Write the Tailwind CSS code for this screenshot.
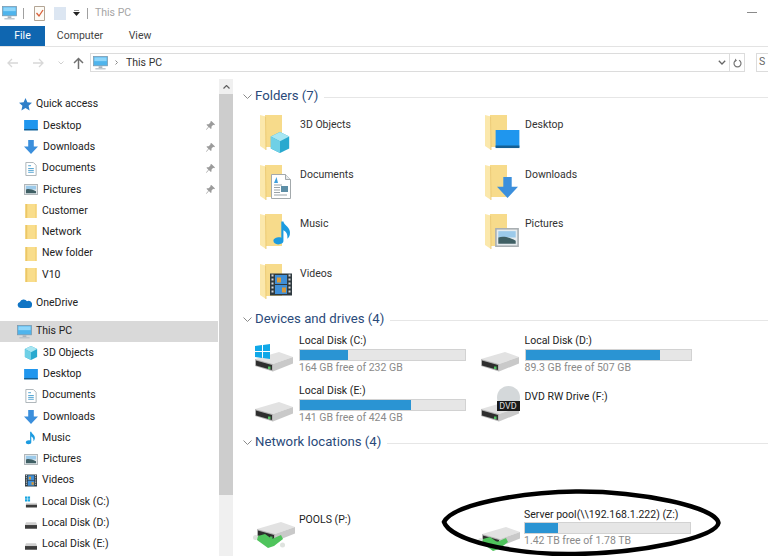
<!DOCTYPE html>
<html lang="en">
<head>
<meta charset="UTF-8" />
<title>This PC</title>
<script src="https://cdn.jsdelivr.net/npm/@tailwindcss/browser@4"></script>
</head>
<body class="bg-white text-[#222] w-[768px] h-[556px] overflow-hidden relative font-['Roboto',sans-serif] text-[10.500px] leading-none">

<!-- shared icons -->
<svg class="hidden" width="0" height="0">
  <symbol id="pc" viewBox="0 0 16 15">
    <rect x="0.5" y="0.5" width="15" height="10" fill="#4fb4ec" stroke="#7b98ad" stroke-width="0.8"/>
    <rect x="1.5" y="1.5" width="13" height="4" fill="#8fd6fa"/>
    <rect x="6" y="11" width="4" height="2" fill="#a9b4bc"/>
    <rect x="2.5" y="13" width="11" height="1.4" fill="#b9c2c8"/>
  </symbol>
  <symbol id="mini-desktop" viewBox="0 0 15 12">
    <rect width="15" height="11" fill="#1f96ee"/>
    <rect y="9.8" width="15" height="1.6" fill="#155f93"/>
  </symbol>
  <symbol id="mini-down" viewBox="0 0 15 15">
    <path d="M4.5 0h6v7H15l-7.500 8L0 7h4.500z" fill="#3b8fdc"/>
  </symbol>
  <symbol id="mini-doc" viewBox="0 0 12 15">
    <path d="M.5.500h8l3 3v11H.5z" fill="#fff" stroke="#a8b0b5"/>
    <path d="M3 4h3M3 7h6M3 9h6M3 11h6" stroke="#4a9fd0"/>
  </symbol>
  <symbol id="big-doc" viewBox="0 0 20 25">
    <path d="M.5.500h14l5 5v19H.5z" fill="#fff" stroke="#a3a9ac"/>
    <path d="M14.500.500v5h5" fill="#e6eaec" stroke="#a3a9ac"/>
    <path d="M3 9l2.500-6L7 9z" fill="#3f9fdc"/>
    <path d="M3 11h8M3 13.500h6M3 16h6M3 18.500h6M3 21h13" stroke="#9aa3a8"/>
    <rect x="10" y="12" width="7" height="6" fill="#5d8ea6"/>
  </symbol>
  <symbol id="mini-pic" viewBox="0 0 15 12">
    <rect x=".5" y=".5" width="14" height="11" fill="#e6ecef" stroke="#a9afb2"/>
    <rect x="2" y="2" width="11" height="4" fill="#9ccaea"/>
    <path d="M2 6c3-1 6-.5 11 2v2H2z" fill="#3f5f64"/>
  </symbol>
  <symbol id="mini-folder" viewBox="0 0 12 15">
    <rect x="0" y="0" width="12" height="15" fill="#f9dd8b"/>
    <rect x="0" y="0" width="2" height="15" fill="#ecc766"/>
    <rect x="10.500" y="0" width="1.500" height="15" fill="#f3d27a"/>
  </symbol>
  <symbol id="pin" viewBox="0 0 10 10">
    <path d="M6 0l4 4-1 .6-1-.3-2 2 .2 1.700-.8.800-2.200-2.200L.6 9.800 0 9.400l2.600-2.900L.5 4.300l.8-.8 1.700.2 2-2-.3-1z" fill="#9b9b9b"/>
  </symbol>
  <symbol id="cube" viewBox="0 0 16 16">
    <path d="M8 0l7 3.500v9L8 16l-7-3.500v-9z" fill="#29a9cf"/>
    <path d="M8 0l7 3.500L8 7 1 3.500z" fill="#a7e6f2"/>
    <path d="M1 3.500L8 7v9l-7-3.500z" fill="#6fd0e6"/>
  </symbol>
  <symbol id="note" viewBox="0 0 14 16">
    <path d="M6.500 0h1.500c.4 3 5.500 4 4.500 9-.3 1.500-1 2.500-1.800 3 .4-2.500-.3-5-2.700-6v7.500c0 1.800-1.800 2.500-3.700 2.500S1 15 1 13.500 3 11 5 11c.6 0 1.100.1 1.500.3z" fill="#1c9be0"/>
  </symbol>
  <symbol id="film" viewBox="0 0 22 22">
    <rect width="22" height="22" fill="#2f3a40"/>
    <rect x="5" y="1.500" width="12" height="9" fill="#3f8fd8"/>
    <rect x="5" y="11.500" width="12" height="9" fill="#3f8fd8"/>
    <rect x="7" y="4" width="4" height="5" fill="#d99a3a"/>
    <rect x="12" y="14" width="4" height="5" fill="#d99a3a"/>
    <path d="M1.500 2h2M1.500 6h2M1.500 10h2M1.500 14h2M1.500 18h2M18.500 2h2M18.500 6h2M18.500 10h2M18.500 14h2M18.500 18h2" stroke="#d8d8d8" stroke-width="2"/>
  </symbol>
  <symbol id="drive" viewBox="0 0 38 20">
    <path d="M0 7L24 0l14 5-20 7z" fill="#e2e2e2"/>
    <path d="M18 12L38 5v6.500L18 19.500z" fill="#c9c9c9"/>
    <path d="M0 7l18 5v7.500L0 14z" fill="#b5b5b5"/>
    <path d="M1 8.500l16 4.500v5L1 13.500z" fill="#2e2e2e"/>
    <rect x="13" y="14.500" width="2.500" height="2.500" fill="#4fc05f"/>
  </symbol>
  <symbol id="big-folder" viewBox="0 0 22 35">
    <path d="M5 0h17v32H5z" fill="#f7db8b"/>
    <path d="M0 0l6 1.500V35l-6-4z" fill="#fbe8ac"/>
    <path d="M5.500 1.500L6 35" stroke="#e8c46a" stroke-width=".8"/>
  </symbol>
  <symbol id="net-cable" viewBox="0 0 32 14">
    <circle cx="2.500" cy="3.500" r="2.500" fill="#dfe3df"/>
    <circle cx="29.500" cy="11" r="2.500" fill="#dfe3df"/>
    <path d="M5 2l7-2 7 5 9-4 2 4-9 7-6 2L4 6z" fill="#4fc45c"/>
  </symbol>
</svg>

<!-- title bar -->
<header class="h-[26px] flex items-center pl-[2px]">
  <svg class="w-[15px] h-[14px]"><use href="#pc"/></svg>
  <div class="w-px h-[11px] bg-[#a0a0a0] ml-[6px]"></div>
  <svg class="w-[11px] h-[15px] ml-[10px]" viewBox="0 0 11 15">
    <path d="M.5.500h10v14H.5z" fill="#fdfbf6" stroke="#b3a595"/>
    <path d="M2.500 7l2.500 3 4-6" fill="none" stroke="#d9613a" stroke-width="1.300"/>
  </svg>
  <div class="w-[12px] h-[13px] bg-[#dce6f2] ml-[9px]"></div>
  <svg class="w-[7px] h-[6px] ml-[7px]" viewBox="0 0 7 6">
    <path d="M1 0h5" stroke="#222"/><path d="M0 2h7L3.500 6z" fill="#222"/>
  </svg>
  <div class="w-px h-[11px] bg-[#a0a0a0] ml-[7px]"></div>
  <span class="ml-[7px] text-[#a5a5a5]">This PC</span>
  <div class="w-[10px] h-px bg-[#8a8a8a] ml-auto mr-[11px] mt-[-2px]"></div>
</header>

<!-- ribbon tabs -->
<nav class="h-[21px] flex items-stretch border-b border-[#e3e3e3]">
  <div class="w-[45px] bg-[#0f66b0] text-white flex items-center justify-center">File</div>
  <div class="w-[70px] flex items-center justify-center text-[#444]">Computer</div>
  <div class="w-[50px] flex items-center justify-center text-[#444]">View</div>
</nav>

<!-- address bar -->
<div class="h-[32px] flex items-center pb-[1px]">
  <svg class="w-[11px] h-[10px] ml-[7px]" viewBox="0 0 11 10"><path d="M5 1L1 5l4 4M1 5h10" fill="none" stroke="#d8d8d8" stroke-width="1.300"/></svg>
  <svg class="w-[11px] h-[10px] ml-[15px]" viewBox="0 0 11 10"><path d="M6 1l4 4-4 4M10 5H0" fill="none" stroke="#d8d8d8" stroke-width="1.300"/></svg>
  <svg class="w-[6px] h-[4px] ml-[14px]" viewBox="0 0 6 4"><path d="M.5.500L3 3 5.500.500" fill="none" stroke="#d0d0d0"/></svg>
  <svg class="w-[11px] h-[12px] ml-[9px]" viewBox="0 0 11 12"><path d="M1 6l4.500-4.500L10 6M5.500 2v10" fill="none" stroke="#707070" stroke-width="1.500"/></svg>
  <div class="ml-[6px] w-[640px] h-[19px] border border-[#dcdcdc] flex items-center">
    <svg class="w-[15px] h-[14px] ml-[2px]"><use href="#pc"/></svg>
    <svg class="w-[3px] h-[5px] ml-[7px]" viewBox="0 0 3 5"><path d="M.5.500l2 2-2 2" fill="none" stroke="#8a8a8a"/></svg>
    <span class="ml-[8px] pt-px text-[#333]">This PC</span>
    <svg class="w-[8px] h-[5px] ml-auto mr-[3px]" viewBox="0 0 8 5"><path d="M.8.800L4 4 7.200.800" fill="none" stroke="#666" stroke-width="1.300"/></svg>
  </div>
  <div class="w-[15px] h-[19px] border border-l-0 border-[#dcdcdc] flex items-center justify-center">
    <svg class="w-[9px] h-[10px]" viewBox="0 0 9 10"><path d="M3 2.200a3.500 3.500 0 1 0 3 0" fill="none" stroke="#777" stroke-width="1.200"/><path d="M2 .5l2 2-2 1.500z" fill="#777"/></svg>
  </div>
  <div class="ml-[11px] flex-1 h-[19px] border border-r-0 border-[#dcdcdc] flex items-center pl-[2px] text-[#666]">S</div>
</div>

<main class="flex h-[477px]">
  <!-- nav pane -->
  <aside class="w-[218px] shrink-0 pt-[15px]">
    <div class="h-[21.300px] flex items-center pl-[19px] pr-2">
      <svg class="w-[13px] h-[13px] mr-[4px]" viewBox="0 0 13 13"><path d="M6.500 0l1.900 4.200 4.600.5-3.400 3.100 1 4.600-4.100-2.400-4.100 2.400 1-4.600L0 4.700l4.600-.5z" fill="#2f7fc9"/></svg>
      Quick access
    </div>
    <div class="h-[21.300px] flex items-center pl-[24px] pr-[3px]"><svg class="w-[14px] h-[11px] mr-[5px]"><use href="#mini-desktop"/></svg><span class="flex-1">Desktop</span><svg class="w-[9px] h-[9px]"><use href="#pin"/></svg></div>
    <div class="h-[21.300px] flex items-center pl-[24px] pr-[3px]"><svg class="w-[14px] h-[14px] mr-[5px]"><use href="#mini-down"/></svg><span class="flex-1">Downloads</span><svg class="w-[9px] h-[9px]"><use href="#pin"/></svg></div>
    <div class="h-[21.300px] flex items-center pl-[25px] pr-[3px]"><svg class="w-[12px] h-[14px] mr-[5px]"><use href="#mini-doc"/></svg><span class="flex-1">Documents</span><svg class="w-[9px] h-[9px]"><use href="#pin"/></svg></div>
    <div class="h-[21.300px] flex items-center pl-[24px] pr-[3px]"><svg class="w-[14px] h-[11px] mr-[5px]"><use href="#mini-pic"/></svg><span class="flex-1">Pictures</span><svg class="w-[9px] h-[9px]"><use href="#pin"/></svg></div>
    <div class="h-[21.300px] flex items-center pl-[25px]"><svg class="w-[12px] h-[14px] mr-[5px]"><use href="#mini-folder"/></svg>Customer</div>
    <div class="h-[21.300px] flex items-center pl-[25px]"><svg class="w-[12px] h-[14px] mr-[5px]"><use href="#mini-folder"/></svg>Network</div>
    <div class="h-[21.300px] flex items-center pl-[25px]"><svg class="w-[12px] h-[14px] mr-[5px]"><use href="#mini-folder"/></svg>New folder</div>
    <div class="h-[21.300px] flex items-center pl-[25px]"><svg class="w-[12px] h-[14px] mr-[5px]"><use href="#mini-folder"/></svg>V10</div>
    <div class="h-[21.300px] flex items-center pl-[17px] mt-[7px]">
      <svg class="w-[15px] h-[9px] mr-[4px]" viewBox="0 0 15 9"><path d="M3.500 9a3 3 0 0 1-.6-5.900A4 4 0 0 1 10 2.200 3.500 3.500 0 0 1 15 6c0 1.700-1 3-3 3z" fill="#0f74c4"/></svg>
      OneDrive
    </div>
    <div class="h-[21.300px] flex items-center pl-[17px] mt-[7px] bg-[#d9d9d9]"><svg class="w-[15px] h-[14px] mr-[4px]"><use href="#pc"/></svg>This PC</div>
    <div class="h-[21.300px] flex items-center pl-[24px]"><svg class="w-[14px] h-[14px] mr-[5px]"><use href="#cube"/></svg>3D Objects</div>
    <div class="h-[21.300px] flex items-center pl-[24px]"><svg class="w-[14px] h-[11px] mr-[5px]"><use href="#mini-desktop"/></svg>Desktop</div>
    <div class="h-[21.300px] flex items-center pl-[25px]"><svg class="w-[12px] h-[14px] mr-[5px]"><use href="#mini-doc"/></svg>Documents</div>
    <div class="h-[21.300px] flex items-center pl-[24px]"><svg class="w-[14px] h-[14px] mr-[5px]"><use href="#mini-down"/></svg>Downloads</div>
    <div class="h-[21.300px] flex items-center pl-[25px]"><svg class="w-[11px] h-[14px] mr-[6px]"><use href="#note"/></svg>Music</div>
    <div class="h-[21.300px] flex items-center pl-[24px]"><svg class="w-[14px] h-[11px] mr-[5px]"><use href="#mini-pic"/></svg>Pictures</div>
    <div class="h-[21.300px] flex items-center pl-[25px]"><svg class="w-[12px] h-[13px] mr-[5px]"><use href="#film"/></svg>Videos</div>
    <div class="h-[21.300px] flex items-center pl-[25px]">
      <svg class="w-[12px] h-[13px] mr-[5px]" viewBox="0 0 13 13"><path d="M0 1h2.500v2.500H0zM3 1h2.500v2.500H3zM0 4h2.500v2.500H0zM3 4h2.500v2.500H3z" fill="#19a5e0"/><path d="M1 8h12v4H1z" fill="#d5d5d5"/><path d="M1 10h12v3H1z" fill="#3c3c3c"/></svg>
      Local Disk (C:)
    </div>
    <div class="h-[21.300px] flex items-center pl-[25px]">
      <svg class="w-[12px] h-[7px] mr-[5px] mt-[4px]" viewBox="0 0 13 7"><path d="M1 0h11l1 3H0z" fill="#cfcfcf"/><path d="M0 3h13v4H0z" fill="#3c3c3c"/></svg>
      Local Disk (D:)
    </div>
    <div class="h-[21.300px] flex items-center pl-[25px]">
      <svg class="w-[12px] h-[7px] mr-[5px] mt-[4px]" viewBox="0 0 13 7"><path d="M1 0h11l1 3H0z" fill="#cfcfcf"/><path d="M0 3h13v4H0z" fill="#3c3c3c"/></svg>
      Local Disk (E:)
    </div>
  </aside>

  <!-- scrollbar -->
  <div class="w-[14px] ml-px shrink-0 bg-[#f0f0f0] flex flex-col items-center">
    <div class="h-[15px] flex items-center">
      <svg class="w-[7px] h-[4px]" viewBox="0 0 7 4"><path d="M.5 3.500l3-3 3 3" fill="none" stroke="#606060" stroke-width="1.200"/></svg>
    </div>
    <div class="w-full h-[401px] bg-[#cdcdcd]"></div>
  </div>

  <!-- content -->
  <section class="flex-1 pl-[10px] pt-[8px]">
    <div class="flex items-center h-[18px] text-[13.200px]">
      <svg class="w-[9px] h-[5px] mr-[3px]" viewBox="0 0 9 5"><path d="M.5.500l4 4 4-4" fill="none" stroke="#8a8a8a"/></svg>
      <span class="text-[#2a4a7a]">Folders (7)</span>
      <div class="flex-1 h-px bg-[#e6e6e6] ml-[6px] mt-[2px]"></div>
    </div>
    <div class="grid grid-cols-[225px_225px] auto-rows-[49.500px] pl-[17px] pt-[9px]">
      <div class="flex">
        <div class="relative w-[40px] h-[38px] mt-px"><svg class="absolute left-0 top-0 w-[22px] h-[35px]"><use href="#big-folder"/></svg><svg class="absolute left-[9px] top-[17px] w-[22px] h-[21px]"><use href="#cube"/></svg></div>
        <span class="pt-[6px] text-[#333]">3D Objects</span>
      </div>
      <div class="flex">
        <div class="relative w-[40px] h-[38px] mt-px"><svg class="absolute left-0 top-0 w-[22px] h-[35px]"><use href="#big-folder"/></svg><svg class="absolute left-[10px] top-[15px] w-[25px] h-[19px]"><use href="#mini-desktop"/></svg></div>
        <span class="pt-[6px] text-[#333]">Desktop</span>
      </div>
      <div class="flex">
        <div class="relative w-[40px] h-[38px] mt-px"><svg class="absolute left-0 top-0 w-[22px] h-[35px]"><use href="#big-folder"/></svg><svg class="absolute left-[11px] top-[9px] w-[20px] h-[25px]"><use href="#big-doc"/></svg></div>
        <span class="pt-[6px] text-[#333]">Documents</span>
      </div>
      <div class="flex">
        <div class="relative w-[40px] h-[38px] mt-px"><svg class="absolute left-0 top-0 w-[22px] h-[35px]"><use href="#big-folder"/></svg><svg class="absolute left-[12px] top-[12px] w-[21px] h-[21px]"><use href="#mini-down"/></svg></div>
        <span class="pt-[6px] text-[#333]">Downloads</span>
      </div>
      <div class="flex">
        <div class="relative w-[40px] h-[38px] mt-px"><svg class="absolute left-0 top-0 w-[22px] h-[35px]"><use href="#big-folder"/></svg><svg class="absolute left-[12px] top-[4px] w-[20px] h-[30px]"><use href="#note"/></svg></div>
        <span class="pt-[6px] text-[#333]">Music</span>
      </div>
      <div class="flex">
        <div class="relative w-[40px] h-[38px] mt-px"><svg class="absolute left-0 top-0 w-[22px] h-[35px]"><use href="#big-folder"/></svg><svg class="absolute left-[10px] top-[14px] w-[24px] h-[19px]"><use href="#mini-pic"/></svg></div>
        <span class="pt-[6px] text-[#333]">Pictures</span>
      </div>
      <div class="flex">
        <div class="relative w-[40px] h-[38px] mt-px"><svg class="absolute left-0 top-0 w-[22px] h-[35px]"><use href="#big-folder"/></svg><svg class="absolute left-[10px] top-[8px] w-[22px] h-[25px]"><use href="#film"/></svg></div>
        <span class="pt-[6px] text-[#333]">Videos</span>
      </div>
    </div>

    <div class="flex items-center h-[18px] text-[13.200px] mt-[-2px]">
      <svg class="w-[9px] h-[5px] mr-[3px]" viewBox="0 0 9 5"><path d="M.5.500l4 4 4-4" fill="none" stroke="#8a8a8a"/></svg>
      <span class="text-[#2a4a7a]">Devices and drives (4)</span>
      <div class="flex-1 h-px bg-[#e6e6e6] ml-[6px] mt-[2px]"></div>
    </div>
    <div class="grid grid-cols-[225.500px_225px] auto-rows-[49.500px] pl-[12px] pt-[5px]">
      <div class="flex">
        <div class="relative w-[44px] h-[44px]"><svg class="absolute left-0 top-[19px] w-[38px] h-[20px]"><use href="#drive"/></svg>
          <svg class="absolute left-0 top-[11px] w-[15px] h-[15px]" viewBox="0 0 15 15"><path d="M0 2l7-1v6H0zM8 1l7-1v7H8zM0 8h7v6l-7-1zM8 8h7v7l-7-1z" fill="#10a8e8"/></svg></div>
        <div class="w-[167px]">
          <p class="h-[16px] pt-[3px] text-[#222]">Local Disk (C:)</p>
          <div class="h-[12px] bg-[#e6e6e6] border border-[#d2d2d2]"><div class="h-full bg-[#2a94d3]" style="width:29%"></div></div>
          <p class="pt-[2px] text-[#8a8a8a]">164 GB free of 232 GB</p>
        </div>
      </div>
      <div class="flex">
        <div class="relative w-[44px] h-[44px]"><svg class="absolute left-0 top-[19px] w-[38px] h-[20px]"><use href="#drive"/></svg></div>
        <div class="w-[167px]">
          <p class="h-[16px] pt-[3px] text-[#222]">Local Disk (D:)</p>
          <div class="h-[12px] bg-[#e6e6e6] border border-[#d2d2d2]"><div class="h-full bg-[#2a94d3]" style="width:81.500%"></div></div>
          <p class="pt-[2px] text-[#8a8a8a]">89.3 GB free of 507 GB</p>
        </div>
      </div>
      <div class="flex">
        <div class="relative w-[44px] h-[44px]"><svg class="absolute left-0 top-[19px] w-[38px] h-[20px]"><use href="#drive"/></svg></div>
        <div class="w-[167px]">
          <p class="h-[16px] pt-[3px] text-[#222]">Local Disk (E:)</p>
          <div class="h-[12px] bg-[#e6e6e6] border border-[#d2d2d2]"><div class="h-full bg-[#2a94d3]" style="width:67%"></div></div>
          <p class="pt-[2px] text-[#8a8a8a]">141 GB free of 424 GB</p>
        </div>
      </div>
      <div class="flex">
        <div class="relative w-[44px] h-[44px]"><svg class="absolute left-0 top-[19px] w-[38px] h-[20px]"><use href="#drive"/></svg>
          <div class="absolute left-[16px] top-[3px] w-[23px] h-[23px] rounded-full bg-[#d4d8da]"></div>
          <div class="absolute left-[16px] top-[18px] w-[23px] h-[10px] bg-[#1a1a1a] text-[#ddd] text-[9px] leading-[10px] text-center">DVD</div></div>
        <p class="pt-[9px] text-[#222]">DVD RW Drive (F:)</p>
      </div>
    </div>

    <div class="flex items-center h-[18px] text-[13.200px] mt-[1px]">
      <svg class="w-[9px] h-[5px] mr-[3px]" viewBox="0 0 9 5"><path d="M.5.500l4 4 4-4" fill="none" stroke="#8a8a8a"/></svg>
      <span class="text-[#2a4a7a]">Network locations (4)</span>
      <div class="flex-1 h-px bg-[#e6e6e6] ml-[6px] mt-[2px]"></div>
    </div>
    <div class="grid grid-cols-[225px_225px] pl-[12px] pt-[55px]">
      <div class="flex pt-[6px]">
        <div class="relative w-[44px] h-[40px]"><svg class="absolute left-[2px] top-[10px] w-[38px] h-[20px]"><use href="#drive"/></svg><svg class="absolute left-[-2px] top-[22px] w-[32px] h-[14px]"><use href="#net-cable"/></svg></div>
        <p class="pt-[3px] text-[#222]">POOLS (P:)</p>
      </div>
      <div class="flex">
        <div class="relative w-[44px] h-[44px]"><svg class="absolute left-[2px] top-[21px] w-[38px] h-[20px]"><use href="#drive"/></svg><svg class="absolute left-[-2px] top-[31px] w-[32px] h-[14px]"><use href="#net-cable"/></svg></div>
        <div class="w-[167px]">
          <p class="h-[16px] pt-[4px] whitespace-nowrap text-[#222]">Server pool(\\192.168.1.222) (Z:)</p>
          <div class="h-[12px] bg-[#e6e6e6] border border-[#d2d2d2]"><div class="h-full bg-[#2a94d3]" style="width:20%"></div></div>
          <p class="pt-[2px] text-[#8a8a8a]">1.42 TB free of 1.78 TB</p>
        </div>
      </div>
    </div>
  </section>
</main>

<!-- hand-drawn ellipse over the screenshot -->
<svg class="absolute left-0 top-0 w-[768px] h-[556px] pointer-events-none" viewBox="0 0 768 556">
  <path d="M444 522C452 505 520 492 576 491.500C640 491 716 507 718.500 523C716 538 640 553 575 554C512 555 450 540 444 522Z" fill="none" stroke="#000" stroke-width="4.500"/>
</svg>
</body>
</html>
